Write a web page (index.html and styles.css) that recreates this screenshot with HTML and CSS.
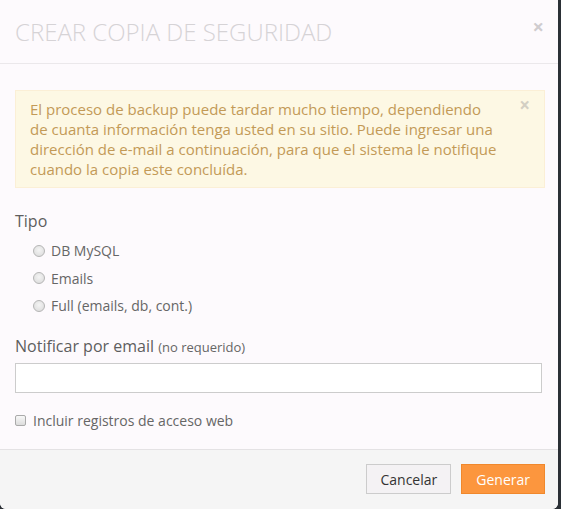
FILE: index.html
```html
<!DOCTYPE html>
<html lang="es">
<head>
<meta charset="utf-8">
<title>Crear copia de seguridad</title>
<link rel="stylesheet" href="styles.css">
</head>
<body>
<div class="modal">
  <div class="modal-header">
    <h3 class="modal-title">CREAR COPIA DE SEGURIDAD</h3>
    <span class="close">×</span>
  </div>
  <div class="modal-body">
    <div class="alert">
      <span class="alert-close">×</span>
      El proceso de backup puede tardar mucho tiempo, dependiendo de cuanta información tenga usted en su sitio. Puede ingresar una dirección de e-mail a continuación, para que el sistema le notifique cuando la copia este concluída.
    </div>
    <div class="group">
      <div class="group-label">Tipo</div>
      <label class="radio-row"><span class="radio"></span>DB MySQL</label>
      <label class="radio-row"><span class="radio"></span>Emails</label>
      <label class="radio-row"><span class="radio"></span>Full (emails, db, cont.)</label>
    </div>
    <div class="group group-email">
      <div class="group-label">Notificar por email <small>(no requerido)</small></div>
      <div class="input"></div>
    </div>
    <label class="check-row"><span class="checkbox"></span>Incluir registros de acceso web</label>
  </div>
  <div class="modal-footer">
    <button class="btn btn-default">Cancelar</button>
    <button class="btn btn-primary">Generar</button>
  </div>
</div>
</body>
</html>
```

FILE: styles.css
```css
html, body {
  margin: 0;
  padding: 0;
  background: #2b3036;
  height: 509px;
  overflow: hidden;
}
body {
  font-family: "Open Sans", "Liberation Sans", sans-serif;
  font-size: 14px;
  color: #666;
}
.modal {
  width: 558px;
  height: 509px;
  background: #fdfafd;
  border-radius: 0 0 6px 6px;
  display: flex;
  flex-direction: column;
  overflow: hidden;
}
.modal-header {
  height: 64px;
  border-bottom: 1px solid #ebe8eb;
  display: flex;
  align-items: center;
  justify-content: space-between;
  padding: 0 14px 0 15px;
  box-sizing: border-box;
}
.modal-title {
  margin: 0;
  font-weight: 300;
  font-size: 24px;
  color: #d6d3d6;
}
.close {
  font-size: 20px;
  font-weight: 700;
  color: #cfcccf;
  line-height: 1;
  margin-top: -9px;
}
.modal-body {
  padding: 26px 15px 0 15px;
  flex: 1;
}
.alert {
  position: relative;
  background: #fdf8e4;
  border: 1px solid #fbefd6;
  color: #c39a57;
  padding: 8px 44px 8px 14px;
  margin-right: -2px;
  line-height: 20px;
  font-size: 15px;
}
.alert-close {
  position: absolute;
  right: 14px;
  top: 4px;
  font-size: 19px;
  font-weight: 700;
  color: #d3cfc3;
  line-height: 20px;
}
.group {
  margin-top: 22px;
}
.group-email {
  margin-top: 15px;
}
.group-label {
  font-size: 16px;
  line-height: 22px;
  color: #5e5e5e;
  margin-bottom: 5px;
}
.group-label small {
  font-size: 13px;
  color: #666;
}
.radio-row {
  display: flex;
  align-items: center;
  height: 27.5px;
  padding-left: 18px;
  font-size: 14px;
  color: #666;
}
.radio {
  width: 10px;
  height: 10px;
  border-radius: 50%;
  border: 1px solid #b5b5b5;
  background: radial-gradient(circle at 50% 40%, #f4f4f4, #d9d9d9);
  margin-right: 6px;
  flex: none;
}
.input {
  height: 28px;
  border: 1px solid #ccc;
  background: #fff;
  margin-top: 1px;
  margin-right: 1px;
}
.check-row {
  display: flex;
  align-items: center;
  margin-top: 18px;
  font-size: 14px;
  color: #666;
}
.checkbox {
  width: 9px;
  height: 9px;
  border: 1px solid #aaa;
  border-radius: 2px;
  background: linear-gradient(#f8f8f8, #dcdcdc);
  margin-right: 7px;
}
.modal-footer {
  height: 60px;
  border-top: 1px solid #e4e2e4;
  background: #f5f5f5;
  display: flex;
  justify-content: flex-end;
  align-items: flex-start;
  padding: 14px 13px 0 0;
  box-sizing: border-box;
  gap: 10px;
}
.btn {
  font-family: "Open Sans", "Liberation Sans", sans-serif;
  font-size: 14px;
  height: 30px;
  padding: 0 13px;
  border-radius: 0;
  cursor: pointer;
}
.btn-default {
  background: #f4f2f4;
  border: 1px solid #ccc;
  color: #333;
}
.btn-primary {
  background: #fc963e;
  border: 1px solid #f0882c;
  color: #fff;
  padding: 0 14px;
}
```
